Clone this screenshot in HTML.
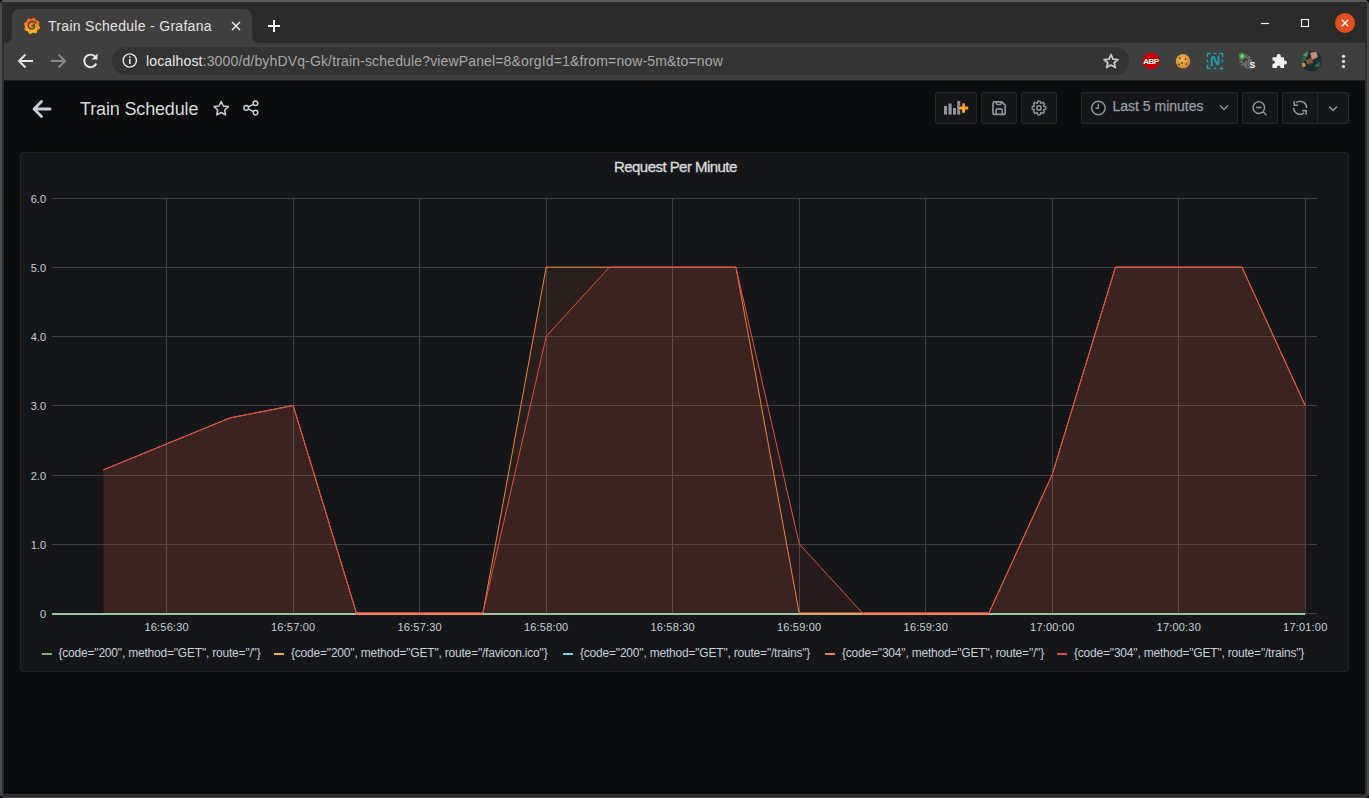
<!DOCTYPE html>
<html><head><meta charset="utf-8">
<style>
*{margin:0;padding:0;box-sizing:border-box}
html,body{width:1369px;height:798px;overflow:hidden;background:#333;font-family:"Liberation Sans",sans-serif}
.abs{position:absolute}
#win{position:absolute;left:0;top:0;width:1369px;height:798px;background:#2f2f2f;border-top:2px solid #5c5c5c;border-left:2px solid #4d4d4d;border-right:2px solid #4a4a4a;border-bottom:1px solid #4a4a4a}
#tabstrip{position:absolute;left:2px;top:2px;width:1365px;height:40px;background:#2b2b2b}
#tab{position:absolute;left:12px;top:9px;width:240px;height:34px;background:#3f3f3f;border-radius:8px 8px 0 0}
#toolbar{position:absolute;left:4px;top:43px;width:1361px;height:37px;background:#3f3f3f}
#omni{position:absolute;left:112px;top:47px;width:1017px;height:28px;background:#333333;border-radius:14px}
#content{position:absolute;left:4px;top:80px;width:1361px;height:714px;background:#0b0c0e;border-top:1px solid #1c1c1d}
.t{position:absolute;white-space:nowrap}
.lg{top:646px;font-size:12px;line-height:14px;color:#c7d0d9;letter-spacing:-0.2px}
.yl{left:0;width:46px;text-align:right;font-size:11px;color:#c7d0d9;line-height:14px}
.xl{top:620px;width:60px;text-align:center;font-size:11px;letter-spacing:0.2px;color:#c7d0d9;line-height:14px}
</style></head>
<body>
<div id="win"></div>
<svg class="abs" style="left:0;top:0" width="1369" height="798"><g fill="#000"><path d="M0,0H3L0,3Z"/><path d="M1369,0H1366L1369,3Z"/><path d="M0,795V798H3Z"/><path d="M1369,795V798H1366Z"/></g></svg>
<div id="tabstrip"></div>
<div id="tab"></div>
<div id="toolbar"></div>
<div id="omni"></div>
<svg class="abs" style="left:0;top:0" width="1369" height="90">
 <!-- tab flares -->
 <path d="M4,43 Q12,43 12,35 V43 Z" fill="#3f3f3f"/>
 <path d="M252,35 Q252,43 260,43 H252 Z" fill="#3f3f3f"/>
 <!-- favicon -->
 <defs><linearGradient id="gf" x1="0" y1="0" x2="0" y2="1"><stop offset="0" stop-color="#f05a28"/><stop offset="1" stop-color="#fbca0a"/></linearGradient></defs>
 <g transform="translate(32,25.8)">
  <path d="M1.37,-7.78 L2.86,-7.36 L3.55,-5.57 L4.56,-4.77 L6.47,-4.53 L7.23,-3.18 L6.44,-1.43 L6.60,-0.14 L7.78,1.37 L7.36,2.86 L5.57,3.55 L4.77,4.56 L4.53,6.47 L3.18,7.23 L1.43,6.44 L0.14,6.60 L-1.37,7.78 L-2.86,7.36 L-3.55,5.57 L-4.56,4.77 L-6.47,4.53 L-7.23,3.18 L-6.44,1.43 L-6.60,0.14 L-7.78,-1.37 L-7.36,-2.86 L-5.57,-3.55 L-4.77,-4.56 L-4.53,-6.47 L-3.18,-7.23 L-1.43,-6.44 L-0.14,-6.60Z" fill="url(#gf)" stroke="url(#gf)" stroke-width="0.8" stroke-linejoin="round"/>
  <path d="M4.07,-2.35 L3.56,-2.96 L2.97,-3.48 L2.30,-3.87 L1.59,-4.15 L0.85,-4.29 L0.11,-4.31 L-0.61,-4.20 L-1.29,-3.98 L-1.92,-3.64 L-2.47,-3.21 L-2.93,-2.71 L-3.29,-2.13 L-3.54,-1.52 L-3.69,-0.88 L-3.72,-0.24 L-3.64,0.38 L-3.46,0.98 L-3.19,1.52 L-2.83,2.00 L-2.40,2.40 L-1.92,2.72 L-1.41,2.95 L-0.87,3.08 L-0.33,3.12 L0.20,3.07 L0.70,2.93 L1.16,2.71 L1.57,2.42 L1.91,2.07 L2.18,1.67 L2.38,1.25 L2.49,0.81 L2.53,0.37 L2.49,-0.07 L2.38,-0.47 L2.20,-0.85 L1.97,-1.17 L1.70,-1.45 L1.38,-1.66 L1.05,-1.82" fill="none" stroke="#3f3f3f" stroke-width="1.4"/>
  <circle cx="0.3" cy="0.4" r="0.9" fill="#3f3f3f"/>
 </g>
 <!-- tab close -->
 <path d="M232,22 L240,30 M240,22 L232,30" stroke="#e8e8e8" stroke-width="1.5"/>
 <!-- new tab plus -->
 <path d="M274,20 V32 M268,26 H280" stroke="#ffffff" stroke-width="2"/>
 <!-- window controls -->
 <path d="M1261,23.5 H1269" stroke="#ffffff" stroke-width="1.2"/>
 <rect x="1301.5" y="19.5" width="7" height="7" fill="none" stroke="#ffffff" stroke-width="1.1"/>
 <circle cx="1345" cy="23" r="10" fill="#e2501b"/>
 <path d="M1341.8,19.8 L1348.2,26.2 M1348.2,19.8 L1341.8,26.2" stroke="#ffffff" stroke-width="1.3"/>
 <!-- toolbar nav -->
 <path d="M33,61 H19.5 M25.5,54.5 L19,61 L25.5,67.5" stroke="#e8e8e8" stroke-width="1.9" fill="none"/>
 <path d="M51,61 H64.5 M58.5,54.5 L65,61 L58.5,67.5" stroke="#8a8a8a" stroke-width="1.9" fill="none"/>
 <path d="M95.5,57 A6.3,6.3 0 1 0 96.3,63.5" stroke="#e8e8e8" stroke-width="1.9" fill="none"/>
 <path d="M97.5,53.5 V59.5 H91.5 Z" fill="#e8e8e8"/>
 <!-- info -->
 <circle cx="129.8" cy="60.5" r="6.6" fill="none" stroke="#e8e8e8" stroke-width="1.4"/>
 <rect x="129" y="59" width="1.6" height="5" fill="#e8e8e8"/>
 <rect x="129" y="56.3" width="1.6" height="1.6" fill="#e8e8e8"/>
 <!-- bookmark star -->
 <path d="M1111,54.5 L1113,59.2 L1118,59.6 L1114.2,62.8 L1115.4,67.6 L1111,65 L1106.6,67.6 L1107.8,62.8 L1104,59.6 L1109,59.2 Z" fill="none" stroke="#c6c6c6" stroke-width="1.8" stroke-linejoin="round"/>
 <!-- ABP -->
 <path d="M1147.6,53 H1154.3 L1159.3,58 V64 L1154.3,69 H1147.6 L1142.6,64 V58 Z" fill="#cc0000"/>
 <text x="1151" y="64.3" font-family="Liberation Sans" font-weight="bold" font-size="8" fill="#fff" text-anchor="middle" letter-spacing="-0.5">ABP</text>
 <!-- cookie -->
 <defs><radialGradient id="ck" cx="0.45" cy="0.4" r="0.6"><stop offset="0" stop-color="#f0c060"/><stop offset="1" stop-color="#d08428"/></radialGradient></defs><circle cx="1183" cy="61.3" r="7.2" fill="url(#ck)"/>
 <circle cx="1180" cy="58.5" r="1" fill="#6b3f17"/><circle cx="1185.5" cy="59" r="1" fill="#6b3f17"/><circle cx="1182" cy="63" r="1" fill="#6b3f17"/><circle cx="1186.5" cy="64" r="0.9" fill="#6b3f17"/><circle cx="1179" cy="64.5" r="0.9" fill="#6b3f17"/>
 <!-- N -->
 <g stroke="#1e9cb0" stroke-width="1.4" fill="none">
  <path d="M1207.5,57 V53.5 H1211 M1213.5,53.5 H1216.5 M1219,53.5 H1222.5 V57 M1222.5,59.5 V62.5 M1207.5,59.5 V62.5 M1207.5,65 V68.5 H1211 M1213.5,68.5 H1216.5"/>
  <path d="M1219.5,68.5 H1223.5 M1221.5,66.5 V70.5" stroke-width="1.2"/>
  <path d="M1211.8,65.5 V59 Q1211.8,56.5 1214,57.2 L1216.5,63.5 Q1218.2,66 1218.5,62.5 V56.5" stroke-width="2" stroke-linecap="round" stroke-linejoin="round"/>
 </g>
 <!-- gears -->
 <circle cx="1245.5" cy="60.5" r="4.6" fill="none" stroke="#6e6e6e" stroke-width="3.4" stroke-dasharray="1.8,1.2"/>
 <circle cx="1245.5" cy="60.5" r="3.6" fill="none" stroke="#626262" stroke-width="2"/>
 <circle cx="1248.5" cy="64.5" r="3.4" fill="none" stroke="#7a7a7a" stroke-width="2.4" stroke-dasharray="1.5,1"/>
 <rect x="1239.3" y="53.3" width="5.6" height="5.6" rx="2" fill="#3fae3f"/>
 <rect x="1240.9" y="54.9" width="2.4" height="2.4" fill="#8fd88f"/>
 <text x="1249.6" y="68.4" font-family="Liberation Sans" font-weight="bold" font-size="8.6" fill="#fff">S</text>
 <!-- puzzle -->
 <path d="M1272.5,57.2 H1276.6 V56.2 A2.1,2.1 0 0 1 1280.8,56.2 V57.2 H1284 V60.4 H1284.9 A2.1,2.1 0 0 1 1284.9,64.6 H1284 V68 H1280.4 V67.2 A1.7,1.7 0 0 0 1277,67.2 V68 H1272.5 V63.8 H1273.3 A1.6,1.6 0 0 0 1273.3,60.6 H1272.5 Z" fill="#f4f4f4"/>
 <!-- avatar -->
 <clipPath id="av"><circle cx="1311.3" cy="60.8" r="10.4"/></clipPath>
 <g clip-path="url(#av)">
  <rect x="1300" y="50" width="23" height="22" fill="#1d2b33"/>
  <path d="M1300,52 L1308,50 L1306,60 L1300,66 Z" fill="#2f5a45"/>
  <path d="M1302,55 L1309,51 L1307,57 Z" fill="#5f8f6a"/>
  <path d="M1310,53 L1316,51.5 L1318,57 L1312,60 Z" fill="#c98a78"/>
  <path d="M1306,60 L1312,58 L1313,63 L1307,64 Z" fill="#8a5a40"/>
  <circle cx="1303.5" cy="65" r="2.2" fill="#c0902e"/>
  <path d="M1316,60 L1322,58 L1322,72 L1314,72 Z" fill="#1a3347"/>
  <path d="M1314,66 L1320,62 L1319,67 Z" fill="#3f6f4a"/>
 </g>
 <!-- menu dots -->
 <circle cx="1343.5" cy="56.3" r="1.6" fill="#e8e8e8"/><circle cx="1343.5" cy="61.4" r="1.6" fill="#e8e8e8"/><circle cx="1343.5" cy="66.5" r="1.6" fill="#e8e8e8"/>
</svg>
<div class="t" style="left:48px;top:18px;font-size:14px;color:#e2e2e2;letter-spacing:0.3px">Train Schedule - Grafana</div>
<div class="t" style="left:146px;top:53px;font-size:14px;color:#e8e8e8;letter-spacing:0.15px">localhost<span style="color:#a8a8a8">:3000/d/byhDVq-Gk/train-schedule?viewPanel=8&amp;orgId=1&amp;from=now-5m&amp;to=now</span></div>
<div id="content"></div>
<!-- grafana header -->
<svg class="abs" style="left:0;top:80px" width="1369" height="60">
 <g transform="translate(0,-80)">
 <path d="M50,109 H34.5 M41.5,101.5 L34,109 L41.5,116.5" stroke="#c7d0d9" stroke-width="2.8" fill="none" stroke-linecap="round" stroke-linejoin="round"/>
 <path d="M221.2,101.5 L223.4,106 L228.3,106.6 L224.7,110 L225.6,114.9 L221.2,112.5 L216.8,114.9 L217.7,110 L214.1,106.6 L219,106 Z" fill="none" stroke="#c7d0d9" stroke-width="1.5" stroke-linejoin="round"/>
 <g fill="none" stroke="#c7d0d9" stroke-width="1.5"><circle cx="255.5" cy="103.3" r="2.3"/><circle cx="246.2" cy="107.9" r="2.3"/><circle cx="255.5" cy="112.6" r="2.3"/><path d="M248.2,106.9 L253.5,104.3 M248.2,108.9 L253.5,111.6"/></g>
 <!-- buttons -->
 <g fill="#141619" stroke="#26282c" stroke-width="1">
  <rect x="935.5" y="92.5" width="41" height="31" rx="2"/>
  <rect x="981.5" y="92.5" width="35" height="31" rx="2"/>
  <rect x="1021.5" y="92.5" width="35" height="31" rx="2"/>
  <rect x="1081.5" y="92.5" width="156" height="31" rx="2"/>
  <rect x="1242.5" y="92.5" width="35" height="31" rx="2"/>
  <rect x="1282.5" y="92.5" width="66" height="31" rx="2"/>
 </g>
 <path d="M1317.5,93 V123" stroke="#26282c"/>
 <!-- add panel icon -->
 <g fill="#8f939b"><rect x="944" y="106" width="3" height="8.6"/><rect x="948.5" y="103.5" width="3.2" height="11.1"/><rect x="953" y="108" width="3" height="6.6"/><rect x="957.2" y="101" width="3" height="13.6"/></g>
 <defs><linearGradient id="gp" x1="0" y1="0" x2="0" y2="1"><stop offset="0" stop-color="#f3813c"/><stop offset="0.5" stop-color="#f9a32a"/><stop offset="1" stop-color="#fccc0d"/></linearGradient></defs><path d="M963.6,103.5 V112.5 M959.1,108 H968.1" stroke="#141619" stroke-width="4.4"/><path d="M962.2,103.3 H965 V106.6 H968.2 V109.4 H965 V112.7 H962.2 V109.4 H959 V106.6 H962.2 Z" fill="url(#gp)"/>
 <!-- save icon -->
 <path d="M995,101.8 H1001.8 L1005.2,105.2 V112.4 A2,2 0 0 1 1003.2,114.4 H995 A2,2 0 0 1 993,112.4 V103.8 A2,2 0 0 1 995,101.8 Z" fill="none" stroke="#8f939b" stroke-width="1.7" stroke-linejoin="round"/>
 <path d="M996.3,102 V103.6 A0.8,0.8 0 0 0 997.1,104.4 H1000.3 A0.8,0.8 0 0 0 1001.1,103.6 V102" fill="none" stroke="#8f939b" stroke-width="1.5"/>
 <path d="M996.2,114.2 V110.3 A1.4,1.4 0 0 1 997.6,108.9 H1000.8 A1.4,1.4 0 0 1 1002.2,110.3 V114.2" fill="none" stroke="#8f939b" stroke-width="1.6"/>
 <!-- gear -->
 <circle cx="1039" cy="107.9" r="2.1" fill="none" stroke="#8f939b" stroke-width="1.5"/>
 <path d="M1037.41,103.16 L1037.80,101.10 L1040.20,101.10 L1040.59,103.16 L1041.23,103.43 L1042.96,102.25 L1044.65,103.94 L1043.47,105.67 L1043.74,106.31 L1045.80,106.70 L1045.80,109.10 L1043.74,109.49 L1043.47,110.13 L1044.65,111.86 L1042.96,113.55 L1041.23,112.37 L1040.59,112.64 L1040.20,114.70 L1037.80,114.70 L1037.41,112.64 L1036.77,112.37 L1035.04,113.55 L1033.35,111.86 L1034.53,110.13 L1034.26,109.49 L1032.20,109.10 L1032.20,106.70 L1034.26,106.31 L1034.53,105.67 L1033.35,103.94 L1035.04,102.25 L1036.77,103.43Z" fill="none" stroke="#8f939b" stroke-width="1.4" stroke-linejoin="round"/>
 <!-- clock -->
 <circle cx="1098.4" cy="108" r="6.8" fill="none" stroke="#8f939b" stroke-width="1.5"/>
 <path d="M1098.4,103.8 V108.3 H1095.6" fill="none" stroke="#8f939b" stroke-width="1.4"/>
 <path d="M1220,105.5 L1224,109.5 L1228,105.5" fill="none" stroke="#8f939b" stroke-width="1.5"/>
 <!-- zoom out -->
 <circle cx="1258.8" cy="107.6" r="5.8" fill="none" stroke="#8f939b" stroke-width="1.5"/>
 <path d="M1256,107.6 H1261.6 M1263,111.8 L1266.5,115.3" stroke="#8f939b" stroke-width="1.5"/>
 <!-- refresh -->
 <path d="M1296.10,102.68 A6.5,6.5 0 0 1 1306.60,108.03 M1293.60,108.03 A6.5,6.5 0 0 0 1304.10,112.92" fill="none" stroke="#8f939b" stroke-width="1.6"/>
 <path d="M1294.2,101.2 V105.2 H1298.2 M1306.2,114.6 V110.6 H1302.2" fill="none" stroke="#8f939b" stroke-width="1.6" stroke-linejoin="round"/>
 <path d="M1329.2,106.6 L1333.1,110.4 L1337,106.6" fill="none" stroke="#8f939b" stroke-width="1.5"/>
 </g>
</svg>
<div class="t" style="left:80px;top:99px;font-size:18px;color:#d8d9da;letter-spacing:-0.15px">Train Schedule</div>
<div class="t" style="left:1112.5px;top:98px;font-size:14px;color:#9a9fa6;-webkit-text-stroke:0.25px #9a9fa6">Last 5 minutes</div>
<!-- panel -->
<div class="abs" style="left:20px;top:152px;width:1329px;height:520px;background:#141619;border:1px solid #202226;border-radius:3px"></div>
<div class="t" style="left:614px;top:158px;font-size:15px;color:#d8d9da;letter-spacing:-0.55px;-webkit-text-stroke:0.35px #d8d9da">Request Per Minute</div>
<!-- legend -->
<div class="abs" style="left:42px;top:653px;width:10px;height:2px;background:#7EB26D"></div>
<div class="abs" style="left:274px;top:653px;width:10px;height:2px;background:#EAB839"></div>
<div class="abs" style="left:563px;top:653px;width:10px;height:2px;background:#6ED0E0"></div>
<div class="abs" style="left:825px;top:653px;width:10px;height:2px;background:#EF843C"></div>
<div class="abs" style="left:1057px;top:653px;width:10px;height:2px;background:#E24D42"></div>
<div class="t lg" style="left:58.5px">{code="200", method="GET", route="/"}</div>
<div class="t lg" style="left:291px">{code="200", method="GET", route="/favicon.ico"}</div>
<div class="t lg" style="left:580px">{code="200", method="GET", route="/trains"}</div>
<div class="t lg" style="left:842px">{code="304", method="GET", route="/"}</div>
<div class="t lg" style="left:1074px">{code="304", method="GET", route="/trains"}</div>
<!--CHART-->
<svg class="abs" style="left:0;top:0" width="1369" height="798">
<path d="M52,613.5H1317 M52,544.5H1317 M52,475.5H1317 M52,405.5H1317 M52,336.5H1317 M52,267.5H1317 M52,198.5H1317 M166.5,198V613 M293.5,198V613 M419.5,198V613 M546.5,198V613 M672.5,198V613 M799.5,198V613 M925.5,198V613 M1052.5,198V613 M1178.5,198V613 M1305.5,198V613" stroke="#424244" stroke-width="1" fill="none"/>
<polygon points="103.45,613.00 103.45,469.82 166.70,443.88 229.95,417.94 293.20,405.49 356.45,613.00 419.70,613.00 482.95,613.00 546.20,267.15 609.45,267.15 672.70,267.15 735.95,267.15 799.20,613.00 862.45,613.00 925.70,613.00 988.95,613.00 1052.20,474.66 1115.45,267.15 1178.70,267.15 1241.95,267.15 1305.20,405.49 1305.20,613.00" fill="#EF843C" fill-opacity="0.1"/>
<polygon points="103.45,613.00 103.45,469.82 166.70,443.88 229.95,417.94 293.20,405.49 356.45,613.00 419.70,613.00 482.95,613.00 546.20,336.32 609.45,267.15 672.70,267.15 735.95,267.15 799.20,543.83 862.45,613.00 925.70,613.00 988.95,613.00 1052.20,474.66 1115.45,267.15 1178.70,267.15 1241.95,267.15 1305.20,405.49 1305.20,613.00" fill="#E24D42" fill-opacity="0.1"/>
<polyline points="103.45,469.82 166.70,443.88 229.95,417.94 293.20,405.49 356.45,613.00 419.70,613.00 482.95,613.00 546.20,267.15 609.45,267.15 672.70,267.15 735.95,267.15 799.20,613.00 862.45,613.00 925.70,613.00 988.95,613.00 1052.20,474.66 1115.45,267.15 1178.70,267.15 1241.95,267.15 1305.20,405.49" stroke="#EF843C" stroke-width="1" fill="none"/>
<polyline points="103.45,469.82 166.70,443.88 229.95,417.94 293.20,405.49 356.45,613.00 419.70,613.00 482.95,613.00 546.20,336.32 609.45,267.15 672.70,267.15 735.95,267.15 799.20,543.83 862.45,613.00 925.70,613.00 988.95,613.00 1052.20,474.66 1115.45,267.15 1178.70,267.15 1241.95,267.15 1305.20,405.49" stroke="#E24D42" stroke-width="1" fill="none"/>
<path d="M52,614H356.45" stroke="#98C8A0" stroke-width="2"/>
<path d="M356.45,614H482.95" stroke="#E8805A" stroke-width="2"/>
<path d="M482.95,614H799.2" stroke="#98C8A0" stroke-width="2"/>
<path d="M799.2,614H862.45" stroke="#D4AA6A" stroke-width="2"/>
<path d="M862.45,614H988.95" stroke="#E8805A" stroke-width="2"/>
<path d="M988.95,614H1305.2" stroke="#98C8A0" stroke-width="2"/>
</svg>
<div class="t yl" style="top:607px">0</div>
<div class="t yl" style="top:538px">1.0</div>
<div class="t yl" style="top:469px">2.0</div>
<div class="t yl" style="top:399px">3.0</div>
<div class="t yl" style="top:330px">4.0</div>
<div class="t yl" style="top:261px">5.0</div>
<div class="t yl" style="top:192px">6.0</div>
<div class="t xl" style="left:136.7px">16:56:30</div>
<div class="t xl" style="left:263.2px">16:57:00</div>
<div class="t xl" style="left:389.7px">16:57:30</div>
<div class="t xl" style="left:516.2px">16:58:00</div>
<div class="t xl" style="left:642.7px">16:58:30</div>
<div class="t xl" style="left:769.2px">16:59:00</div>
<div class="t xl" style="left:895.8px">16:59:30</div>
<div class="t xl" style="left:1022.3px">17:00:00</div>
<div class="t xl" style="left:1148.8px">17:00:30</div>
<div class="t xl" style="left:1275.3px">17:01:00</div>
<!--/CHART-->
</body></html>
